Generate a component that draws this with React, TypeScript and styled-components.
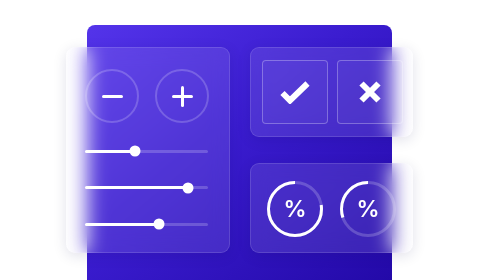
import React from "react";
import styled, { createGlobalStyle } from "styled-components";

const Global = createGlobalStyle`
  html, body { margin: 0; padding: 0; background: #ffffff; }
  body { font-family: Inter, "Noto Sans", sans-serif; }
`;

const Stage = styled.div`
  width: 480px;
  height: 280px;
  display: grid;
  overflow: hidden;
  background: #ffffff;
`;

const Backdrop = styled.div`
  grid-area: 1 / 1;
  margin: 25px 0 0 87px;
  width: 305px;
  height: 255px;
  border-radius: 8px 8px 0 0;
  background: linear-gradient(140deg, #5434ea 0%, #3a1ccf 45%, #2309a8 100%);
`;

const Cards = styled.div`
  grid-area: 1 / 1;
  margin: 47px 0 0 66px;
  align-self: start;
  justify-self: start;
  display: grid;
  grid-template-columns: 164px 163px;
  grid-template-rows: 90px 90px;
  column-gap: 20px;
  row-gap: 26px;
`;

const Card = styled.div<{ $tall?: boolean }>`
  box-sizing: border-box;
  grid-row: ${(p) => (p.$tall ? "1 / span 2" : "auto")};
  border-radius: 9px;
  background: rgba(255, 255, 255, 0.1);
  border: 1px solid rgba(255, 255, 255, 0.13);
  backdrop-filter: blur(10px);
  -webkit-backdrop-filter: blur(10px);
  box-shadow: 0 3px 14px rgba(20, 10, 80, 0.12);
`;

const ControlCard = styled(Card)`
  padding: 21px 0 0 18px;
  display: flex;
  flex-direction: column;
`;

const RoundRow = styled.div`
  display: flex;
  gap: 16px;
`;

const RoundButton = styled.div`
  box-sizing: border-box;
  width: 54px;
  height: 54px;
  border-radius: 50%;
  border: 2px solid rgba(255, 255, 255, 0.2);
  display: flex;
  align-items: center;
  justify-content: center;
  position: relative;
`;

const Bar = styled.span<{ $vertical?: boolean }>`
  position: absolute;
  background: #ffffff;
  border-radius: 2px;
  width: ${(p) => (p.$vertical ? "3px" : "21px")};
  height: ${(p) => (p.$vertical ? "21px" : "3px")};
`;

const Sliders = styled.div`
  margin-top: 26.5px;
  display: flex;
  flex-direction: column;
  gap: 33.5px;
`;

const Track = styled.div`
  position: relative;
  width: 123px;
  height: 3px;
  border-radius: 2px;
  background: rgba(255, 255, 255, 0.2);
`;

const Fill = styled.div`
  height: 100%;
  border-radius: 2px;
  background: #ffffff;
`;

const Thumb = styled.div`
  position: absolute;
  top: 50%;
  width: 11px;
  height: 11px;
  border-radius: 50%;
  background: #ffffff;
  transform: translate(-50%, -50%);
`;

const ActionCard = styled(Card)`
  padding: 12px 0 0 11px;
  display: flex;
  gap: 9px;
`;

const SquareButton = styled.div`
  box-sizing: border-box;
  width: 66px;
  height: 64px;
  border-radius: 4px;
  border: 1px solid rgba(255, 255, 255, 0.28);
  background: rgba(255, 255, 255, 0.04);
  display: flex;
  align-items: center;
  justify-content: center;
`;

const GaugeCard = styled(Card)`
  padding: 17px 0 0 16px;
  display: flex;
  gap: 17px;
`;

const Gauge = styled.div`
  position: relative;
  width: 56px;
  height: 56px;
  display: flex;
  align-items: center;
  justify-content: center;
`;

const GaugeSvg = styled.svg`
  position: absolute;
  inset: 0;
`;

const Percent = styled.span`
  position: relative;
  color: #ffffff;
  font-family: Inter, "Noto Sans", sans-serif;
  font-weight: 600;
  font-size: 23px;
  line-height: 1;
`;

function Slider({ value }: { value: number }) {
  return (
    <Track>
      <Fill style={{ width: `${value * 100}%` }} />
      <Thumb style={{ left: `${value * 100}%` }} />
    </Track>
  );
}

function Ring({ value }: { value: number }) {
  const r = 26.5;
  const c = 2 * Math.PI * r;
  return (
    <Gauge>
      <GaugeSvg width="56" height="56" viewBox="0 0 56 56">
        <circle cx="28" cy="28" r={r} fill="none" stroke="rgba(255,255,255,0.2)" strokeWidth="3" />
        <circle
          cx="28"
          cy="28"
          r={r}
          fill="none"
          stroke="#ffffff"
          strokeWidth="3"
          strokeDasharray={`${c * value} ${c}`}
          transform="translate(56 0) scale(-1 1) rotate(-90 28 28)"
        />
      </GaugeSvg>
      <Percent>%</Percent>
    </Gauge>
  );
}

export default function App() {
  return (
    <>
      <Global />
      <Stage>
        <Backdrop />
        <Cards>
          <ControlCard $tall>
            <RoundRow>
              <RoundButton>
                <Bar />
              </RoundButton>
              <RoundButton>
                <Bar />
                <Bar $vertical />
              </RoundButton>
            </RoundRow>
            <Sliders>
              <Slider value={0.41} />
              <Slider value={0.84} />
              <Slider value={0.6} />
            </Sliders>
          </ControlCard>
          <ActionCard>
            <SquareButton>
              <svg width="32" height="24" viewBox="0 0 32 24">
                <path d="M3.5 13 L11 20.5 L28.5 3.5" fill="none" stroke="#fff" strokeWidth="6" strokeLinejoin="miter" />
              </svg>
            </SquareButton>
            <SquareButton>
              <svg width="24" height="24" viewBox="0 0 24 24">
                <path d="M3.5 3.5 L20.5 20.5 M20.5 3.5 L3.5 20.5" fill="none" stroke="#fff" strokeWidth="6" />
              </svg>
            </SquareButton>
          </ActionCard>
          <GaugeCard>
            <Ring value={0.77} />
            <Ring value={0.3} />
          </GaugeCard>
        </Cards>
      </Stage>
    </>
  );
}
